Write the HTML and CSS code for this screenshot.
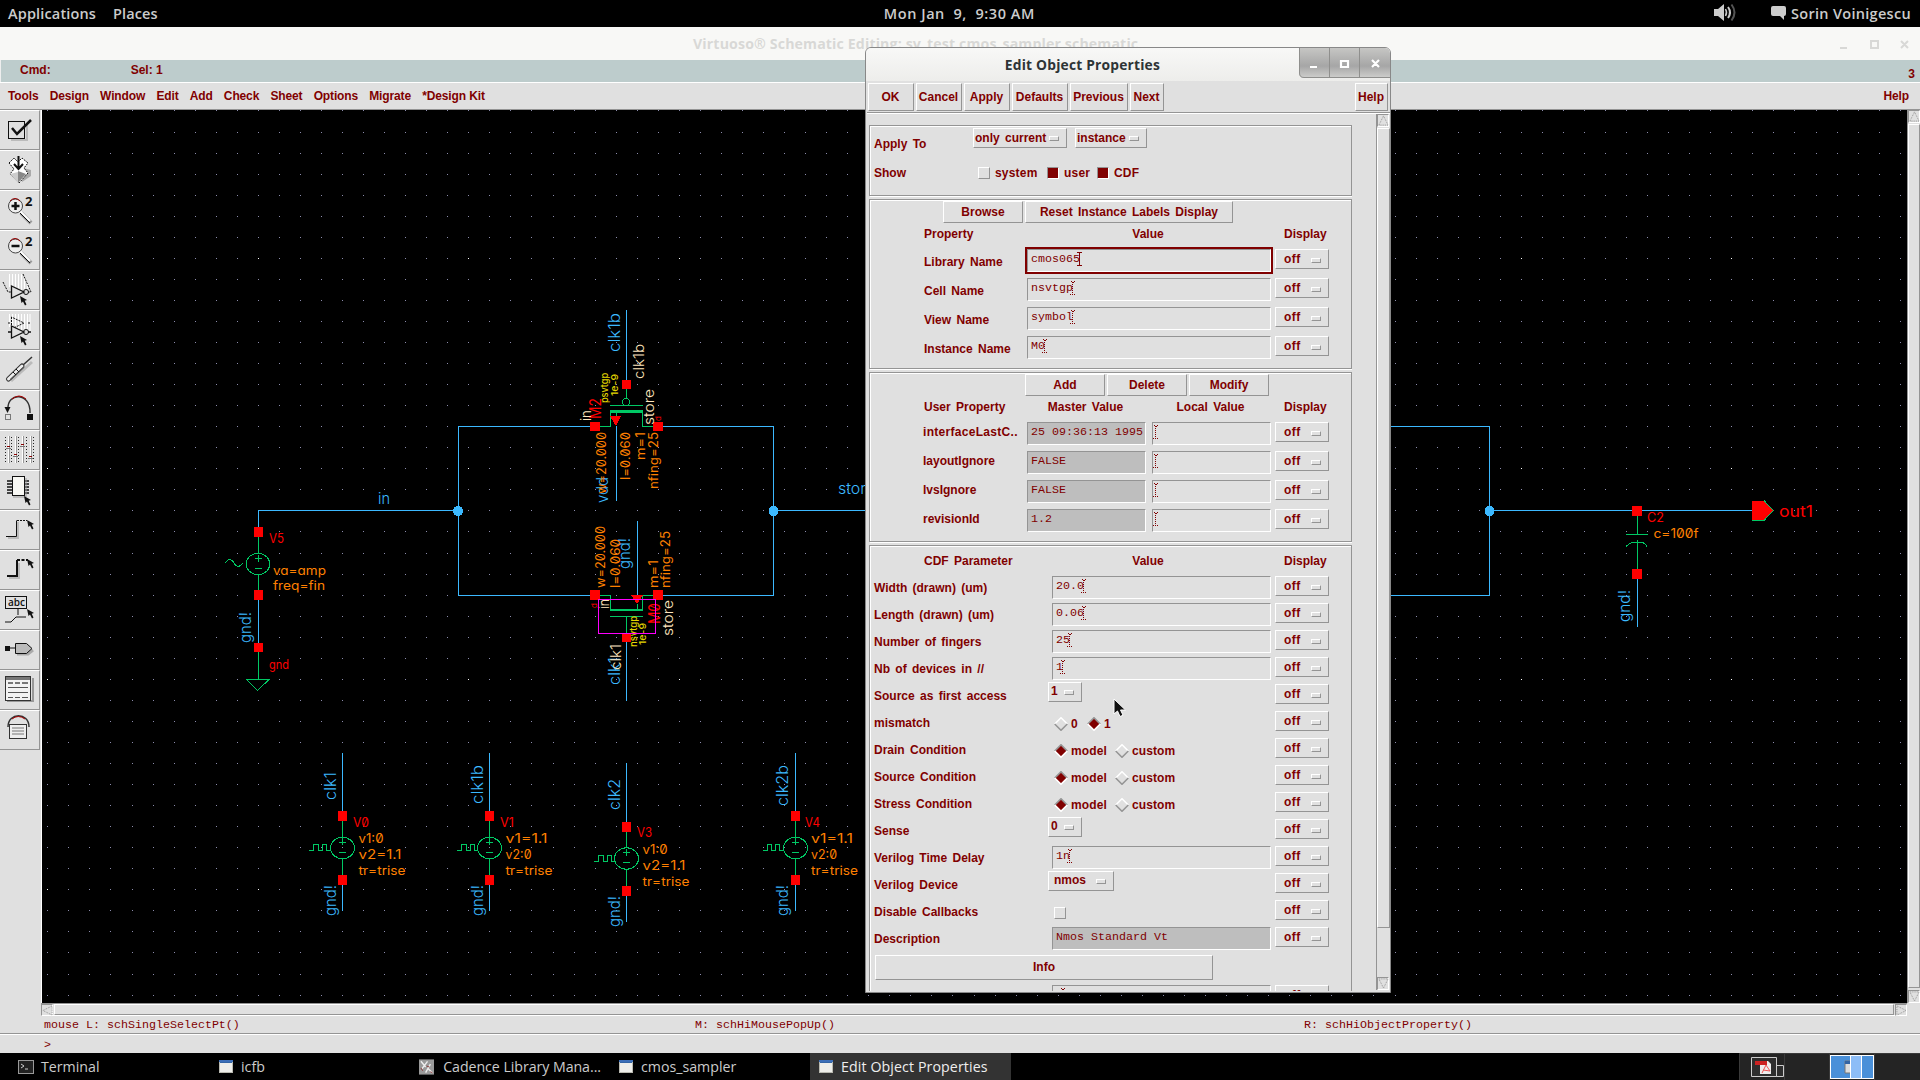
FILE: index.html
```html
<!DOCTYPE html>
<html lang="en">
<head>
<meta charset="utf-8">
<title>Virtuoso Schematic Editing</title>
<link rel="stylesheet" href="styles.css">
</head>
<body>
<svg class="defs" width="0" height="0">
  <defs>
    <symbol id="caret" viewBox="0 0 5 14"><path d="M0.5 .5h1M3.5 .5h1M1.5 1.5h2M2 3.5h1M2 5.5h1M2 7.5h1M2 9.5h1M2 11.5h1M0 13.5h1M2 13.5h1M4 13.5h1" stroke="#800000" shape-rendering="crispEdges"/></symbol>
    <symbol id="win" viewBox="0 0 14 13"><rect width="14" height="13" fill="#eeeeea"/><rect width="14" height="3" fill="#3465a4"/><rect x=".5" y=".5" width="13" height="12" fill="none" stroke="#b9b9b0"/><rect width="14" height="2" fill="#3d6fb8"/></symbol>
    <symbol id="ptr" viewBox="0 0 8 10"><path d="M0 0L1.5 7 3 5.5 5 9.5 6.5 8.5 4.7 4.8 7 4Z" fill="#111"/></symbol>
    <symbol id="src" viewBox="-40 -100 80 200" overflow="visible">
      <g class="grn"><path d="M0-27V-11M0 11V28M-4-6H3M-.5-10V-3M-4 4H3"/><ellipse rx="12" ry="10.7"/></g>
      <path class="pad" d="M-4.5-37h9v10h-9zM-4.5 27h9v10h-9z"/>
    </symbol>
    <symbol id="dOff" viewBox="0 0 14 14"><path d="M.7 7L7 .7 13.300 7" fill="none" stroke="#fff" stroke-width="1.500"/><path d="M.7 7L7 13.300 13.300 7" fill="none" stroke="#949494" stroke-width="1.500"/></symbol>
    <symbol id="dOn" viewBox="0 0 14 14"><path d="M7 1.500L12.500 7 7 12.500 1.500 7z" fill="#800000"/><path d="M.7 7L7 .7 13.300 7" fill="none" stroke="#949494" stroke-width="1.500"/><path d="M.7 7L7 13.300 13.300 7" fill="none" stroke="#fff" stroke-width="1.500"/></symbol>
  </defs>
</svg>
<div class="desktop">
  <header class="topbar">
    <span class="apps">Applications</span><span class="places">Places</span>
    <span class="clock">Mon Jan&nbsp; 9,&nbsp; 9:30 AM</span>
    <svg class="speaker" viewBox="0 0 24 20" width="24" height="20"><path d="M0 6h4l6-5v17l-6-5H0z" fill="#ccc"/><path d="M11.500 6q2 3.500 0 7" stroke="#ccc" stroke-width="1.500" fill="none"/><path d="M14 4q4 5.500 0 11" stroke="#ccc" stroke-width="2" fill="none"/><path d="M17.500 1.500q6 8 0 16" stroke="#555" stroke-width="2" fill="none"/></svg>
    <svg class="chat" viewBox="0 0 15 14" width="15" height="14"><path d="M2 0h11q2 0 2 2v6q0 2-2 2v4l-4-4H2Q0 10 0 8V2q0-2 2-2z" fill="#ccc"/></svg>
    <span class="user">Sorin Voinigescu</span>
  </header>

  <main class="app">
    <div class="titlebar"><span>Virtuoso® Schematic Editing: sv_test cmos_sampler schematic</span>
      <svg class="wctl" viewBox="0 0 72 12" width="72" height="12" fill="none" stroke="#d8d8d6" stroke-width="2"><path d="M1 9h7M32 2h7v7h-7zM62 2l7 7M69 2l-7 7"/></svg>
    </div>
    <div class="status"><span>Cmd:</span><span class="sel">Sel: 1</span><span class="num">3</span></div>
    <nav class="menubar"><span>Tools</span><span>Design</span><span>Window</span><span>Edit</span><span>Add</span><span>Check</span><span>Sheet</span><span>Options</span><span>Migrate</span><span>*Design Kit</span><span class="help">Help</span></nav>
    <div class="work">
      <aside class="tools">
        <div><svg viewBox="0 0 40 40"><path d="M11 30h16V15" stroke="#bbb" stroke-width="2" fill="none"/><rect x="8.500" y="11.500" width="16" height="17" class="k"/><path d="M12 18l5 6L31 10" class="k3"/></svg></div>
        <div><svg viewBox="0 0 40 40"><path d="M22 32l9-6v-6l-8-2z" fill="#aaa"/><path d="M9 13l5-5 4 4 4-4 6 5-4 5 4 5-9 10-9-9 4-5z" fill="#fff" stroke="#111" stroke-dasharray="2 1"/><path d="M10 24l8 9V22z" fill="#ccc"/><path d="M18 33l8-9-8-3z" fill="#888"/><path d="M18.500 6v13M14 14l4.500 5 4.500-5" class="k2"/></svg></div>
        <div><svg viewBox="0 0 40 40"><path d="M21 23l10 10" stroke="#999" stroke-width="4"/><path d="M20 21l10 10" stroke="#fff" stroke-width="2"/><path d="M20 23l10 10" class="k"/><circle cx="15.500" cy="16" r="7" fill="#eee" stroke="#444"/><path d="M10 11q5-5 10 0" stroke="#900" fill="none"/><path d="M11.500 16h8M15.500 12v8" class="k3"/><text x="25" y="16">2</text></svg></div>
        <div><svg viewBox="0 0 40 40"><path d="M21 23l10 10" stroke="#999" stroke-width="4"/><path d="M20 21l10 10" stroke="#fff" stroke-width="2"/><path d="M20 23l10 10" class="k"/><circle cx="15.500" cy="16" r="7" fill="#eee" stroke="#444"/><path d="M10 11q5-5 10 0" stroke="#900" fill="none"/><path d="M11.500 16h8" class="k3"/><text x="25" y="16">2</text></svg></div>
        <div><svg viewBox="0 0 40 40"><path d="M9.500 4v13M12.500 4v14M15.500 4v15M18.500 4v16M21.500 4v17M24.500 8v11M27.500 12v7" class="w"/><path d="M3 12l5 10h3M23 4l8 18h-3" class="k" stroke-dasharray="2 1"/><path d="M11.500 16v12L24 22z" fill="#e0e0e0" stroke="#111" stroke-width="1.300"/><circle cx="26" cy="22" r="2.500" class="k"/><use href="#ptr" x="20" y="26" width="8" height="10"/></svg></div>
        <div><svg viewBox="0 0 40 40"><path d="M9.500 4v13M12.500 4v14M15.500 4v15M18.500 4v16M21.500 4v17M24.500 4v15M27.500 4v15M30 4v18" class="w"/><path d="M11.500 7v12L24 13zM8 13h3M28 13h3" class="k" stroke-dasharray="2 1"/><path d="M11.500 16v12L24 22zM8 22h3M28 22h3" fill="#e0e0e0" stroke="#111" stroke-width="1.300"/><circle cx="26" cy="22" r="2.500" class="k"/><use href="#ptr" x="20" y="26" width="8" height="10"/></svg></div>
        <div><svg viewBox="0 0 40 40"><path d="M11 31L32 12" stroke="#bbb" stroke-width="3"/><path d="M8.500 29L22 16" stroke="#333" stroke-width="5" stroke-linecap="round"/><path d="M8.500 29L22 16" stroke="#eee" stroke-width="3" stroke-linecap="round"/><path d="M10.500 29.500L24 17" stroke="#555" stroke-width="1.500"/><path d="M23 15l9-8" stroke="#333" stroke-width="1.500"/><path d="M13 22l3 3M16 19l3 3" class="k"/></svg></div>
        <div><svg viewBox="0 0 40 40"><path d="M8 19C7 2 31 2 30 23" fill="none" stroke="#333" stroke-width="1.500"/><path d="M12 9Q19 3 26 9" fill="none" stroke="#a00"/><path d="M4.500 17h6l-3 6z" fill="#111"/><rect x="27" y="24" width="6" height="6" fill="#111"/><rect x="5.500" y="24.500" width="5" height="5" class="k" stroke-dasharray="1 1"/></svg></div>
        <div><svg viewBox="0 0 40 40" shape-rendering="crispEdges"><path d="M9.500 6v27M16.500 6v27M23.500 6v27M31.500 6v27" stroke="#999" stroke-width="1"/><path d="M8.500 6v27M15.500 6v27M22.500 6v27M30.500 6v27" class="w"/><path d="M5.500 7v26M11.500 7v26M18.500 7v26M26.500 7v26M33.500 7v26" stroke="#222" stroke-dasharray="1 2"/><path d="M7 16h3M14 24h3M21 14h3M29 26h3" stroke="#800"/><path d="M6 18h5M13 26h5M20 16h5M28 28h5" stroke="#777"/></svg></div>
        <div><svg viewBox="0 0 40 40"><path d="M7 11h22M7 14h22M7 17h22M7 20h22M7 23h22" class="k" stroke-width="1.500"/><rect x="12.500" y="6.500" width="12" height="19" fill="#f8f8f4" stroke="#111"/><path d="M13 27h13V8" fill="none" stroke="#999"/><use href="#ptr" x="24" y="26" width="8" height="10"/></svg></div>
        <div><svg viewBox="0 0 40 40"><path d="M8 28h10V12" stroke="#bbb" stroke-width="2" fill="none"/><path d="M6 26.500h10.500v-16" class="k"/><path d="M17 10.500h10" class="k" stroke-dasharray="2 1"/><use href="#ptr" x="27" y="10" width="8" height="10"/></svg></div>
        <div><svg viewBox="0 0 40 40"><path d="M9 28h10V13" stroke="#bbb" stroke-width="2" fill="none"/><path d="M7 26h10V10" class="k2"/><path d="M17 10h11" class="k2" stroke-dasharray="3 1.500"/><use href="#ptr" x="27" y="9" width="8" height="10"/></svg></div>
        <div><svg viewBox="0 0 40 40"><rect x="5.500" y="6.500" width="21" height="12" class="k"/><text x="8" y="16" class="abc">abc</text><path d="M18 19v6M5 32h6l5-5h10" class="k"/><use href="#ptr" x="27" y="19" width="8" height="10"/></svg></div>
        <div><svg viewBox="0 0 40 40"><path d="M7 18h9" class="k"/><rect x="5" y="16" width="5" height="5" fill="#111"/><path d="M17 24h11l5-4" stroke="#aaa" stroke-width="3" fill="none"/><path d="M15.500 13.500h11l5.500 5-5.500 5h-11z" fill="#bbb" stroke="#111"/></svg></div>
        <div><svg viewBox="0 0 40 40"><path d="M7 31h26V8" stroke="#999" stroke-width="2" fill="none"/><rect x="5.500" y="6.500" width="25" height="24" fill="#f2f2f2" stroke="#333"/><path d="M6 8.500h24" stroke="#777" stroke-width="3"/><path d="M8 13h5M15 13h5M22 13h6" stroke="#777" stroke-width="2"/><path d="M8 17.500h20M8 22.500h20M8 27.500h5M15 27.500h5M22 27.500h6" stroke="#555"/></svg></div>
        <div><svg viewBox="0 0 40 40"><path d="M8 17C8 2 29 2 29 17" fill="none" stroke="#333" stroke-width="1.500"/><path d="M12 9Q18 4 25 9" fill="none" stroke="#a00"/><rect x="9.500" y="14.500" width="17" height="14" fill="#eee" stroke="#333"/><path d="M12 18h12M12 21h12M12 24h12" stroke="#777"/></svg></div>
      </aside>
      <svg class="sheet" viewBox="42 110 1865 893" width="1865" height="893">
        <path id="dots" stroke="#8c8cac"/><path id="dots10" stroke="#fff"/>
        <g class="blu">
          <path d="M258.500 527V510.500H458M590 426.500H458.500V595.500H590M626.500 310V380M663 426.500H773.500V595.500H663M773 510.500H870M616.500 426V501M637.500 521V595M626.500 642V701M258.500 600V643"/>
          <path d="M1380 426.500H1489.500V595.500H1380M1489 510.500H1752M1637.500 579V627"/>
          <path d="M342.500 753V811M342.500 884V911M489.500 753V811M489.500 884V911M626.500 763V822M626.500 895V922M795.500 753V811M795.500 884V911"/>
          <g class="node"><circle cx="458" cy="511" r="5"/><circle cx="773.500" cy="511" r="5"/><circle cx="1489.500" cy="511" r="5"/></g>
        </g>
        <g class="grn">
          <path d="M258.500 537V553M258.500 574V590M258.500 652V679M255 558.500h7M258.500 555v7M255 568.500h7"/><ellipse cx="258" cy="564" rx="11.700" ry="10.700"/>
          <path class="sm" d="M246.500 679.500H269L257.500 690.500ZM225 563q5-7 9 0t9 0"/>
          <path d="M626.500 389V398M610 405.500H643M600 426.500H610.500V412M653 426.500H642.500V412M616.500 413V417"/><circle cx="626" cy="402" r="3.700"/><path d="M610 411.500H643" stroke-width="3"/>
          <path d="M600 595.500H610.500V609M653 595.500H642.500V609M637.500 604V609M610 616.500H643M626.500 616V634"/><path d="M610 610H643" stroke-width="2"/>
          <path d="M1637.500 516V534M1626 534.500H1648M1637.500 540V569"/><path class="sm" d="M1626 546.500Q1630 542.500 1634 542.500H1641Q1645 542.500 1647 546.500"/>
          <path d="M1752 520.500h12l9-10-9-10"/>
          <path d="M309 850.500h4.500v-6h4.500v6h4v-6h4v6h4M457 850.500h4.500v-6h4.500v6h4v-6h4v6h4M594 861.500h4.500v-6h4.500v6h4v-6h4v6h4M762.500 850.500h4.500v-6h4.500v6h4v-6h4v6h4"/>
        </g>
        <path class="pad" d="M254 527h9v10h-9zM254 590h9v10h-9zM254 643h9v9h-9zM590 422h10v9h-10zM653 422h10v9h-10zM622 380h9v9h-9zM590 590h10v10h-10zM653 590h10v10h-10zM622 633h9v9h-9zM1632 506h10v10h-10zM1632 569h10v10h-10zM1752 501h12l9 9.500-9 9.500h-12zM610 416h11l-5 10zM631 595h12l-6 9z"/>
        <use href="#src" x="302.500" y="748" width="80" height="200"/><use href="#src" x="449.500" y="748" width="80" height="200"/><use href="#src" x="586.500" y="758.500" width="80" height="200"/><use href="#src" x="755.500" y="748" width="80" height="200"/>
        <g class="lb">
          <text x="378" y="504" textLength="12">in</text>
          <text x="838" y="494" textLength="37">store</text>
          <text transform="translate(620 352)rotate(-90)" textLength="39">clk1b</text>
          <text transform="translate(608 503)rotate(-90)" textLength="26">vdd</text>
          <text transform="translate(630 569)rotate(-90)" textLength="31">gnd!</text>
          <text transform="translate(620 685)rotate(-90)" textLength="28">clk1</text>
          <text transform="translate(251 643)rotate(-90)" textLength="31">gnd!</text>
          <text transform="translate(335.500 800)rotate(-90)" textLength="28">clk1</text>
          <text transform="translate(336 916)rotate(-90)" textLength="31">gnd!</text>
          <text transform="translate(482.500 804)rotate(-90)" textLength="39">clk1b</text>
          <text transform="translate(483 916)rotate(-90)" textLength="31">gnd!</text>
          <text transform="translate(619.500 810)rotate(-90)" textLength="31">clk2</text>
          <text transform="translate(620 927)rotate(-90)" textLength="31">gnd!</text>
          <text transform="translate(787.500 806)rotate(-90)" textLength="41">clk2b</text>
          <text transform="translate(788 916)rotate(-90)" textLength="31">gnd!</text>
          <text transform="translate(1630 622)rotate(-90)" textLength="32">gnd!</text>
        </g>
        <g class="lo">
          <text x="273" y="575" textLength="53">va=amp</text><text x="273" y="590" textLength="52">freq=fin</text>
          <text transform="translate(606 494)rotate(-90)" textLength="62">w=20.000</text>
          <text transform="translate(630 480)rotate(-90)" textLength="48">l=0.060</text>
          <text transform="translate(645 460)rotate(-90)" textLength="28">m=1</text>
          <text transform="translate(658 489)rotate(-90)" textLength="57">nfing=25</text>
          <text transform="translate(605 588)rotate(-90)" textLength="62">w=20.000</text>
          <text transform="translate(620 588)rotate(-90)" textLength="49">l=0.060</text>
          <text transform="translate(658 588)rotate(-90)" textLength="28">m=1</text>
          <text transform="translate(670 588)rotate(-90)" textLength="57">nfing=25</text>
          <text x="358.500" y="843" textLength="25">v1:0</text><text x="358.500" y="859" textLength="43">v2=1.1</text><text x="358.500" y="875" textLength="47">tr=trise</text>
          <text x="505.500" y="843" textLength="42">v1=1.1</text><text x="505.500" y="859" textLength="26">v2:0</text><text x="505.500" y="875" textLength="47">tr=trise</text>
          <text x="642.500" y="853.500" textLength="25">v1:0</text><text x="642.500" y="869.500" textLength="43">v2=1.1</text><text x="642.500" y="885.500" textLength="47">tr=trise</text>
          <text x="811" y="843" textLength="42">v1=1.1</text><text x="811" y="859" textLength="26">v2:0</text><text x="811" y="875" textLength="47">tr=trise</text>
          <text x="1653.500" y="538" textLength="45">c=100f</text>
        </g>
        <g class="lr">
          <text x="269" y="543" textLength="15">V5</text><text x="269" y="669" textLength="20">gnd</text>
          <text x="353" y="826.500" textLength="16">V0</text><text x="500" y="826.500" textLength="14">V1</text><text x="637" y="837" textLength="15">V3</text><text x="805" y="826.500" textLength="15">V4</text>
          <text x="1647" y="522" textLength="17">C2</text><text x="1779" y="517" class="big" textLength="34">out1</text>
          <text class="big" transform="translate(601 419)rotate(-90)" textLength="21">M2</text>
          <text class="big" transform="translate(660 624)rotate(-90)" textLength="21">M0</text>
          <text class="tiny" transform="translate(661 421)rotate(-90)">d</text><text class="tiny" transform="translate(597 608)rotate(-90)">d</text>
        </g>
        <g class="lc">
          <text transform="translate(644 379)rotate(-90)" textLength="35">clk1b</text>
          <text transform="translate(654 425)rotate(-90)" textLength="36">store</text>
          <text transform="translate(591 421)rotate(-90)" textLength="11">in</text>
          <text transform="translate(609 609)rotate(-90)" textLength="10">in</text>
          <text transform="translate(673 636)rotate(-90)" textLength="36">store</text>
          <text transform="translate(621 670)rotate(-90)" textLength="26">clk1</text>
        </g>
        <g class="ly">
          <text transform="translate(608 403)rotate(-90)" textLength="30">psvtgp</text><text transform="translate(618 396)rotate(-90)" textLength="22">1e-9</text>
          <text transform="translate(637 647)rotate(-90)" textLength="31">nsvtgp</text><text transform="translate(646 645)rotate(-90)" textLength="22">1e-9</text>
        </g>
        <rect x="598.500" y="599.500" width="57" height="34" fill="none" stroke="#f0f"/>
      </svg>
      <div class="vbar"><i class="arr"><svg viewBox="0 0 12 12"><path d="M6 1L1 11h10z"/></svg></i><b></b><i class="arr"><svg viewBox="0 0 12 12"><path d="M1 1h10L6 11z"/></svg></i></div>
    </div>
    <div class="hbar"><i class="arr"><svg viewBox="0 0 12 12"><path d="M1 6L11 1v10z"/></svg></i><b></b><i class="arr"><svg viewBox="0 0 12 12"><path d="M1 1l10 5-10 5z"/></svg></i></div>
    <div class="mouse mono"><span>mouse L: schSingleSelectPt()</span><span>M: schHiMousePopUp()</span><span>R: schHiObjectProperty()</span></div>
    <div class="prompt mono">&gt;</div>
  </main>

  <footer class="taskbar">
    <span class="task t1"><svg viewBox="0 0 16 14" width="16" height="14"><rect x=".5" y=".5" width="15" height="13" fill="#222" stroke="#999"/><path d="M3 4l3 2-3 2M7 9h3" stroke="#ccc" fill="none"/></svg>Terminal</span>
    <span class="task t2"><svg width="14" height="13"><use href="#win"/></svg>icfb</span>
    <span class="task t3"><svg viewBox="0 0 16 16" width="16" height="16"><rect width="16" height="16" fill="#999"/><path d="M2 2l5 6M9 2l-6 8M12 5l-5 9M9 9l5 5" stroke="#eee" stroke-width="1.500"/><path d="M2 9l2 3M8 7l3 1M12 13l2 1" stroke="#833"/></svg>Cadence Library Mana...</span>
    <span class="task t4"><svg width="14" height="13"><use href="#win"/></svg>cmos_sampler</span>
    <span class="task t5"><svg width="14" height="13"><use href="#win"/></svg>Edit Object Properties</span>
    <svg class="pager" viewBox="0 0 181 27" width="181" height="27"><rect width="181" height="27" fill="#242424"/><path d="M.5 27V.5H181M45.500 0v27M90.500 0v27M135.500 0v27" stroke="#3a3a3a" fill="none"/><path d="M12.500 4.500h25v19h-25zM37.500 12.500h7v11h-7z" fill="#2e2e2e" stroke="#ccc"/><path d="M21 8h8l3 3v10H21z" fill="#eee"/><path d="M16 8h12v4H16z" fill="#c22"/><path d="M23 20l4-8 4 6-7-1" stroke="#e55" fill="none"/><rect x="91.500" y="2.500" width="43" height="23" fill="#4a90d9" stroke="#fff"/><path d="M106 8h8v12h-8z" fill="#ddd" stroke="#777"/><path d="M106 8h8v3h-8z" fill="#3465a4"/><rect x="111.500" y="2.500" width="11" height="23" fill="#8dbdf7" stroke="#fff"/></svg>
  </footer>

  <section class="dialog">
    <div class="dtitle"><span>Edit Object Properties</span>
      <svg class="dctl" viewBox="0 0 91 30" width="91" height="30"><defs><linearGradient id="g" x2="0" y2="1"><stop stop-color="#c6c6c4"/><stop offset=".6" stop-color="#a6a6a6"/><stop offset="1" stop-color="#cfcfcd"/></linearGradient></defs><path d="M0 0H91V30H5Q0 30 0 25z" fill="url(#g)"/><path d="M.5 0V25q0 4.500 4.500 4.500H91M30.500 0v30M60.500 0v30" stroke="#8f8f8d" fill="none"/><path d="M11 19h7M42 13h7v6h-7zM73 12l7 7M80 12l-7 7" stroke="#fff" stroke-width="2.200" fill="none"/></svg>
    </div>
    <div class="dbtns"><button style="width:46px">OK</button><button style="width:46px">Cancel</button><button style="width:46px">Apply</button><button style="width:56px">Defaults</button><button style="width:58px">Previous</button><button style="width:34px">Next</button><button class="dhelp" style="width:33px">Help</button></div>
    <div class="dbody">
      <div class="form">
        <div class="panel p1">
          <div class="r1"><label>Apply To</label><span class="opt only">only current<i></i></span><span class="opt">instance<i></i></span></div>
          <div class="r2"><label>Show</label><i class="chk"></i><span class="w1">system</span><i class="chk on"></i><span class="w2">user</span><i class="chk on"></i><span>CDF</span></div>
        </div>
        <div class="panel p2">
          <div class="pb b1"><button style="width:80px">Browse</button><button style="width:208px">Reset Instance Labels Display</button></div>
          <div class="ph"><span>Property</span><span class="c1">Value</span><span class="cd">Display</span></div>
          <div class="row"><label>Library Name</label><div class="fld focus">cmos065<svg class="car" viewBox="0 0 5 14"><path d="M0 .5h5M2.500 0v14M0 13.500h5" stroke="#800000"/></svg></div><span class="off">off<i></i></span></div>
          <div class="row"><label>Cell Name</label><div class="fld">nsvtgp<svg class="car"><use href="#caret"/></svg></div><span class="off">off<i></i></span></div>
          <div class="row"><label>View Name</label><div class="fld">symbol<svg class="car"><use href="#caret"/></svg></div><span class="off">off<i></i></span></div>
          <div class="row"><label>Instance Name</label><div class="fld">M0<svg class="car"><use href="#caret"/></svg></div><span class="off">off<i></i></span></div>
        </div>
        <div class="panel p3">
          <div class="pb b2"><button style="width:80px">Add</button><button style="width:80px">Delete</button><button style="width:80px">Modify</button></div>
          <div class="ph"><span>User Property</span><span class="c2">Master Value</span><span class="c3">Local Value</span><span class="cd">Display</span></div>
          <div class="row"><label class="wide">interfaceLastC..</label><div class="fld ro">25 09:36:13 1995</div><div class="fld loc"><svg class="car"><use href="#caret"/></svg></div><span class="off">off<i></i></span></div>
          <div class="row"><label>layoutIgnore</label><div class="fld ro">FALSE</div><div class="fld loc"><svg class="car"><use href="#caret"/></svg></div><span class="off">off<i></i></span></div>
          <div class="row"><label>lvsIgnore</label><div class="fld ro">FALSE</div><div class="fld loc"><svg class="car"><use href="#caret"/></svg></div><span class="off">off<i></i></span></div>
          <div class="row"><label>revisionId</label><div class="fld ro">1.2</div><div class="fld loc"><svg class="car"><use href="#caret"/></svg></div><span class="off">off<i></i></span></div>
        </div>
        <div class="panel p4">
          <div class="ph"><span>CDF Parameter</span><span class="c1">Value</span><span class="cd">Display</span></div>
          <div class="row"><label>Width (drawn) (um)</label><div class="fld">20.0<svg class="car"><use href="#caret"/></svg></div><span class="off">off<i></i></span></div>
          <div class="row"><label>Length (drawn) (um)</label><div class="fld">0.06<svg class="car"><use href="#caret"/></svg></div><span class="off">off<i></i></span></div>
          <div class="row"><label>Number of fingers</label><div class="fld">25<svg class="car"><use href="#caret"/></svg></div><span class="off">off<i></i></span></div>
          <div class="row"><label>Nb of devices in //</label><div class="fld">1<svg class="car"><use href="#caret"/></svg></div><span class="off">off<i></i></span></div>
          <div class="row"><label>Source as first access</label><div class="ctl"><span class="opt num1">1<i></i></span></div><span class="off">off<i></i></span></div>
          <div class="row"><label>mismatch</label><div class="ctl rad"><svg class="dia"><use href="#dOff"/></svg><span class="z">0</span><svg class="dia"><use href="#dOn"/></svg><span>1</span></div><span class="off">off<i></i></span></div>
          <div class="row"><label>Drain Condition</label><div class="ctl rad"><svg class="dia"><use href="#dOn"/></svg><span class="m">model</span><svg class="dia"><use href="#dOff"/></svg><span>custom</span></div><span class="off">off<i></i></span></div>
          <div class="row"><label>Source Condition</label><div class="ctl rad"><svg class="dia"><use href="#dOn"/></svg><span class="m">model</span><svg class="dia"><use href="#dOff"/></svg><span>custom</span></div><span class="off">off<i></i></span></div>
          <div class="row"><label>Stress Condition</label><div class="ctl rad"><svg class="dia"><use href="#dOn"/></svg><span class="m">model</span><svg class="dia"><use href="#dOff"/></svg><span>custom</span></div><span class="off">off<i></i></span></div>
          <div class="row"><label>Sense</label><div class="ctl"><span class="opt num1">0<i></i></span></div><span class="off">off<i></i></span></div>
          <div class="row"><label>Verilog Time Delay</label><div class="fld">1n<svg class="car"><use href="#caret"/></svg></div><span class="off">off<i></i></span></div>
          <div class="row"><label>Verilog Device</label><div class="ctl"><span class="opt nmos">nmos<i></i></span></div><span class="off">off<i></i></span></div>
          <div class="row"><label>Disable Callbacks</label><div class="ctl"><i class="chk dis"></i></div><span class="off">off<i></i></span></div>
          <div class="row"><label>Description</label><div class="fld ro">Nmos Standard Vt</div><span class="off">off<i></i></span></div>
          <button class="info">Info</button>
          <div class="row"><label></label><div class="fld">0<svg class="car"><use href="#caret"/></svg></div><span class="off">off<i></i></span></div>
        </div>
      </div>
      <div class="vbar dv"><i class="arr"><svg viewBox="0 0 12 12"><path d="M6 1L1 11h10z"/></svg></i><b></b><i class="arr"><svg viewBox="0 0 12 12"><path d="M1 1h10L6 11z"/></svg></i></div>
    </div>
  </section>
  <svg class="cursor" viewBox="0 0 14 20" width="14" height="20"><path d="M1 1v15l3.500-3 2.500 5.500 3-1.300-2.500-5.200h5z" fill="#111" stroke="#fff"/></svg>
</div>
<script src="grid.js"></script>
</body>
</html>
```
FILE: grid.js
```js
// Snap grid of the schematic sheet; every tenth point is brighter.
const PITCH = 21.05;
let minor = '', major = '';
for (let j = -1; j <= 41; j++) {
  const y = Math.floor(132 + PITCH * j) + 0.5;
  for (let i = 0; i <= 88; i++) {
    const dot = `M${Math.floor(47.83 + PITCH * i)} ${y}h1`;
    if (i % 10 === 0 && j % 10 === 6) major += dot; else minor += dot;
  }
}
document.getElementById('dots').setAttribute('d', minor);
document.getElementById('dots10').setAttribute('d', major);

// Labels stretch their glyphs, not just the gaps, to their drawn length.
document.querySelectorAll('.sheet text[textLength]').forEach(t => t.setAttribute('lengthAdjust', 'spacingAndGlyphs'));
```
FILE: styles.css
```css
* { box-sizing: border-box; }
body { margin: 0; background: #000; overflow: hidden; }
.defs { position: absolute; }
.desktop {
  position: relative; width: 1920px; height: 1080px; display: flex; flex-direction: column;
  font: bold 12px/14px "Liberation Sans", sans-serif; color: #800000; white-space: nowrap;
}
.mono, .fld { font: 11.67px/14px "Liberation Mono", monospace; }
i { font-style: normal; }

/* GNOME panel */
.topbar {
  height: 27px; display: flex; align-items: center; padding: 0 9px 0 8px; position: relative;
  color: #ccc; font: 600 14.5px/28px "Open Sans", sans-serif;
}
.apps { width: 105px; letter-spacing: .15px; }
.clock { margin-left: 726px; width: 831px; letter-spacing: .55px; }
.topbar .places { width: 45px; letter-spacing: .15px; }
.speaker { flex: none; margin-top: -2px; }
.chat { flex: none; margin-left: 33px; margin-top: -2px; }
.user { margin-left: 5px; letter-spacing: .3px; }

/* schematic editor window */
.app { height: 1026px; display: flex; flex-direction: column; background: #e0e0e0; }
.titlebar {
  height: 33px; background: #f8f8f6; color: #d8d8d6; position: relative;
  display: flex; justify-content: space-between; padding: 0 9px 0 693px;
  font: bold 14.2px/34px "Open Sans", sans-serif; letter-spacing: .12px;
}
.wctl { margin-top: 12px; }
.status { height: 22px; background: #bdcccc; display: flex; padding: 3px 5px 0 19px; border-left: 1px solid #eee; }
.sel { margin-left: 80px; }
.num { margin: 4px 0 0 auto; }
.menubar { height: 28px; border-top: 1px solid #fff; border-bottom: 1px solid #949494; display: flex; gap: 11.2px; padding: 6px 11px 0 8px; letter-spacing: -.13px; }
.help { margin-left: auto; }
.work { height: 893px; display: flex; }
.tools { width: 42px; border-right: 1px solid #fff; display: flex; flex-direction: column; }
.tools div { width: 40px; height: 40px; border: solid; border-width: 1px 1px 1px 0; border-color: #fff #949494 #949494; }
.tools svg { display: block; width: 40px; height: 40px; margin-top: -1px; }
.tools .k { fill: none; stroke: #111; }
.tools .k2 { fill: none; stroke: #111; stroke-width: 2; }
.tools .k3 { fill: none; stroke: #111; stroke-width: 2.5; }
.tools .w { fill: none; stroke: #fff; }
.tools text { font: bold 13px "Open Sans", sans-serif; fill: #111; }
.tools .abc { font-size: 10px; font-weight: 600; }

.sheet { background: #000; flex: none; shape-rendering: crispEdges; }
.sheet text { font-family: Inter, sans-serif; font-weight: 300; font-variant-numeric: slashed-zero; font-feature-settings: "cv11"; }
.blu { fill: none; stroke: #3cb9ff; }
.blu .node { fill: #3cb9ff; stroke: none; }
.grn { fill: none; stroke: #00c864; }
.pad { fill: #f00; }
.lb { fill: #3cb9ff; font-size: 15.5px; }
.lo { fill: #ff8000; font-size: 12.5px; }
.lr { fill: #f00; font-size: 12.5px; }
.sheet .lo text, .sheet .lr text { font-weight: 400; }
.lr .big { font-size: 15.5px; }
.lr .tiny { font-size: 8px; }
.lc { fill: #ffe6bf; font-size: 14.5px; }
.ly { fill: #e6d800; font-size: 9.5px; }
.sheet .ly text { font-weight: 500; }

.vbar { width: 13px; border-left: 1px solid #949494; display: flex; flex-direction: column; }
.arr { width: 12px; height: 13px; flex: none; border: 1px solid; border-color: #949494 #fff #fff #949494; }
.arr svg { display: block; width: 11px; height: 11px; fill: none; stroke: #8c8c8c; stroke-dasharray: 1 1; }
.vbar b { flex: 1; margin: 1px 0 2px; border: 1px solid; border-color: #fff #949494 #949494 #fff; }
.hbar { height: 13px; width: 1866px; margin-left: 41px; display: flex; border-top: 1px solid #949494; border-bottom: 1px solid #fff; }
.hbar b { flex: 1; border: 1px solid; border-color: #fff #949494 #949494 #fff; margin: 0 1px; }
.hbar .arr { height: 12px; }
.mouse { height: 18px; padding-left: 44px; border-bottom: 1px solid #949494; display: grid; grid-template-columns: 651px 609px 1fr; }
.mouse span { line-height: 18px; }
.prompt { flex: 1; border-top: 1px solid #fff; padding: 3px 0 0 44px; }

.taskbar {
  height: 27px; display: flex; background: #000; color: #ccc;
  font: 14.2px/28px "Open Sans", sans-serif;
}
.task { display: flex; align-items: center; gap: 8px; padding-left: 18px; height: 27px; }
.t1 { width: 201px; gap: 7px; }
.t2 { width: 200px; }
.t3 { width: 200px; gap: 9px; letter-spacing: -.05px; }
.t4 { width: 209px; }
.t5 { width: 201px; background: #333; padding-left: 9px; color: #eee; letter-spacing: .1px; }
.pager { margin-left: auto; }

/* property form */
.dialog {
  position: absolute; left: 865px; top: 47px; width: 526px; height: 946px; background: #e0e0e0;
  border: 1px solid #888; border-radius: 6px 6px 0 0; overflow: hidden;
  padding-left: 1px; word-spacing: 2px;
}
.dtitle {
  height: 33px; margin-left: -1px; display: flex; justify-content: flex-end; background: linear-gradient(#f8f8f7, #ededeb);
  font: bold 13.8px/34px "Open Sans", sans-serif; color: #2e3436; word-spacing: 0; letter-spacing: .2px;
}
.dctl { margin-left: 139px; flex: none; }
button {
  font: inherit; color: inherit; background: #e0e0e0; border: 1px solid; border-color: #fff #949494 #949494 #fff;
  padding: 0; border-radius: 0; word-spacing: inherit; text-align: center;
}
.dbtns { height: 32px; border-bottom: 1px solid #949494; box-shadow: 0 1px #fff; padding: 2px 2px 0 1px; display: flex; gap: 2px; }
.dbtns button { height: 28px; padding-right: 1px; }
.dbtns .dhelp { margin-left: auto; }
.dbody { height: 878px; padding-top: 1px; display: flex; justify-content: space-between; }
.form { padding: 11px 0 0 2px; height: 877px; overflow: hidden; }
.panel { width: 483px; border: 1px solid #949494; box-shadow: inset 1px 1px #fff, 1px 1px #fff; margin-bottom: 3px; }
.p1 { height: 71px; }
.p2, .p3 { height: 170px; }
.p4 { height: 600px; }
.dv { width: 14px; margin-bottom: 1px; }
.dv b { flex: none; height: 800px; }
.dv .arr:last-child { margin-top: auto; }

.r1, .r2 { display: flex; padding-left: 4px; }
.r1 label { width: 99px; line-height: 37px; }
.r1 { height: 36px; }
.r2 { height: 22px; line-height: 22px; align-items: center; }
.r2 label { width: 104px; }
.r2 span { margin-left: 5px; letter-spacing: .2px; }
.r2 .w1 { width: 52px; }
.r2 .w2 { width: 33px; }
.opt {
  display: flex; align-items: center; justify-content: space-between; width: 72px; height: 20px; margin-top: 2px;
  border: 1px solid; border-color: #fff #949494 #949494 #fff; padding: 0 7px 1px 1px; line-height: 18px;
}
.opt i, .off i { width: 10px; height: 5px; margin-top: 2px; border: 1px solid; border-color: #fff #949494 #949494 #fff; }
.only { width: 94px; margin-right: 8px; }
.chk { width: 12px; height: 12px; border: 1px solid; border-color: #fff #949494 #949494 #fff; }
.on { background: #800000; border-color: #949494 #fff #fff #949494; }

.pb { display: flex; gap: 2px; padding-top: 1px; }
.pb button { height: 22px; }
.b1 { padding-left: 73px; }
.b2 { padding-left: 155px; }
.ph { height: 21px; line-height: 22px; margin-bottom: 5px; display: grid; grid-template-columns: 102px 119px 6px 119px 4px 54px; padding-left: 54px; column-gap: 0; }
.ph .c1 { grid-column: 2 / 5; text-align: center; }
.ph .c2 { text-align: center; }
.ph .c3 { grid-column: 4; text-align: center; }
.ph .cd { grid-column: 6; padding-left: 10px; }
.row { display: grid; grid-template-columns: 103px 244px 54px; height: 29px; padding-left: 54px; align-items: start; }
.row label { line-height: 26px; }
.p3 .row { grid-template-columns: 103px 119px 6px 119px 54px; }
.p3 .row label { line-height: 20px; margin-left: -1px; }
.p3 .row .wide { letter-spacing: .3px; }
.p3 .loc { grid-column: 4; padding-left: 0; }
.fld { height: 23px; border: 1px solid; border-color: #949494 #fff #fff #949494; padding-left: 3px; line-height: 18px; color: #800000; word-spacing: 0; display: flex; }
.ro { background: #bebebe; }
.focus { outline: 2px solid #800000; }
.car { width: 5px; height: 14px; margin: 2px 0 0 -3px; flex: none; }
.loc .car { margin-left: 0; }
.off {
  width: 54px; height: 20px; margin-left: 4px; display: flex; justify-content: space-between; align-items: center;
  border: 1px solid; border-color: #fff #949494 #949494 #fff; padding: 0 7px 0 8px; letter-spacing: .4px;
}
.p4 .ph { height: 29px; line-height: 30px; margin-bottom: 1px; }
.p4 .row { grid-template-columns: 178px 219px 54px; height: 27px; padding-left: 4px; }
.p4 .row label { line-height: 24px; }
.ctl { height: 27px; display: flex; }
.ctl .opt { margin: -2px 0 0 -4px; padding: 0 7px 2px 2px; }
.ctl .num1 { width: 34px; }
.ctl .nmos { width: 66px; padding-left: 5px; }
.dis { margin: 7px 0 0 2px; }
.rad { line-height: 26px; letter-spacing: .1px; }
.dia { width: 14px; height: 14px; margin: 6px 3px 0 2px; flex: none; }
.z { width: 14px; }
.m { width: 42px; }
.info { display: block; width: 338px; height: 25px; margin: 1px 0 5px 5px; padding-bottom: 2px; }
.cursor { position: absolute; left: 1113px; top: 698px; }
```
